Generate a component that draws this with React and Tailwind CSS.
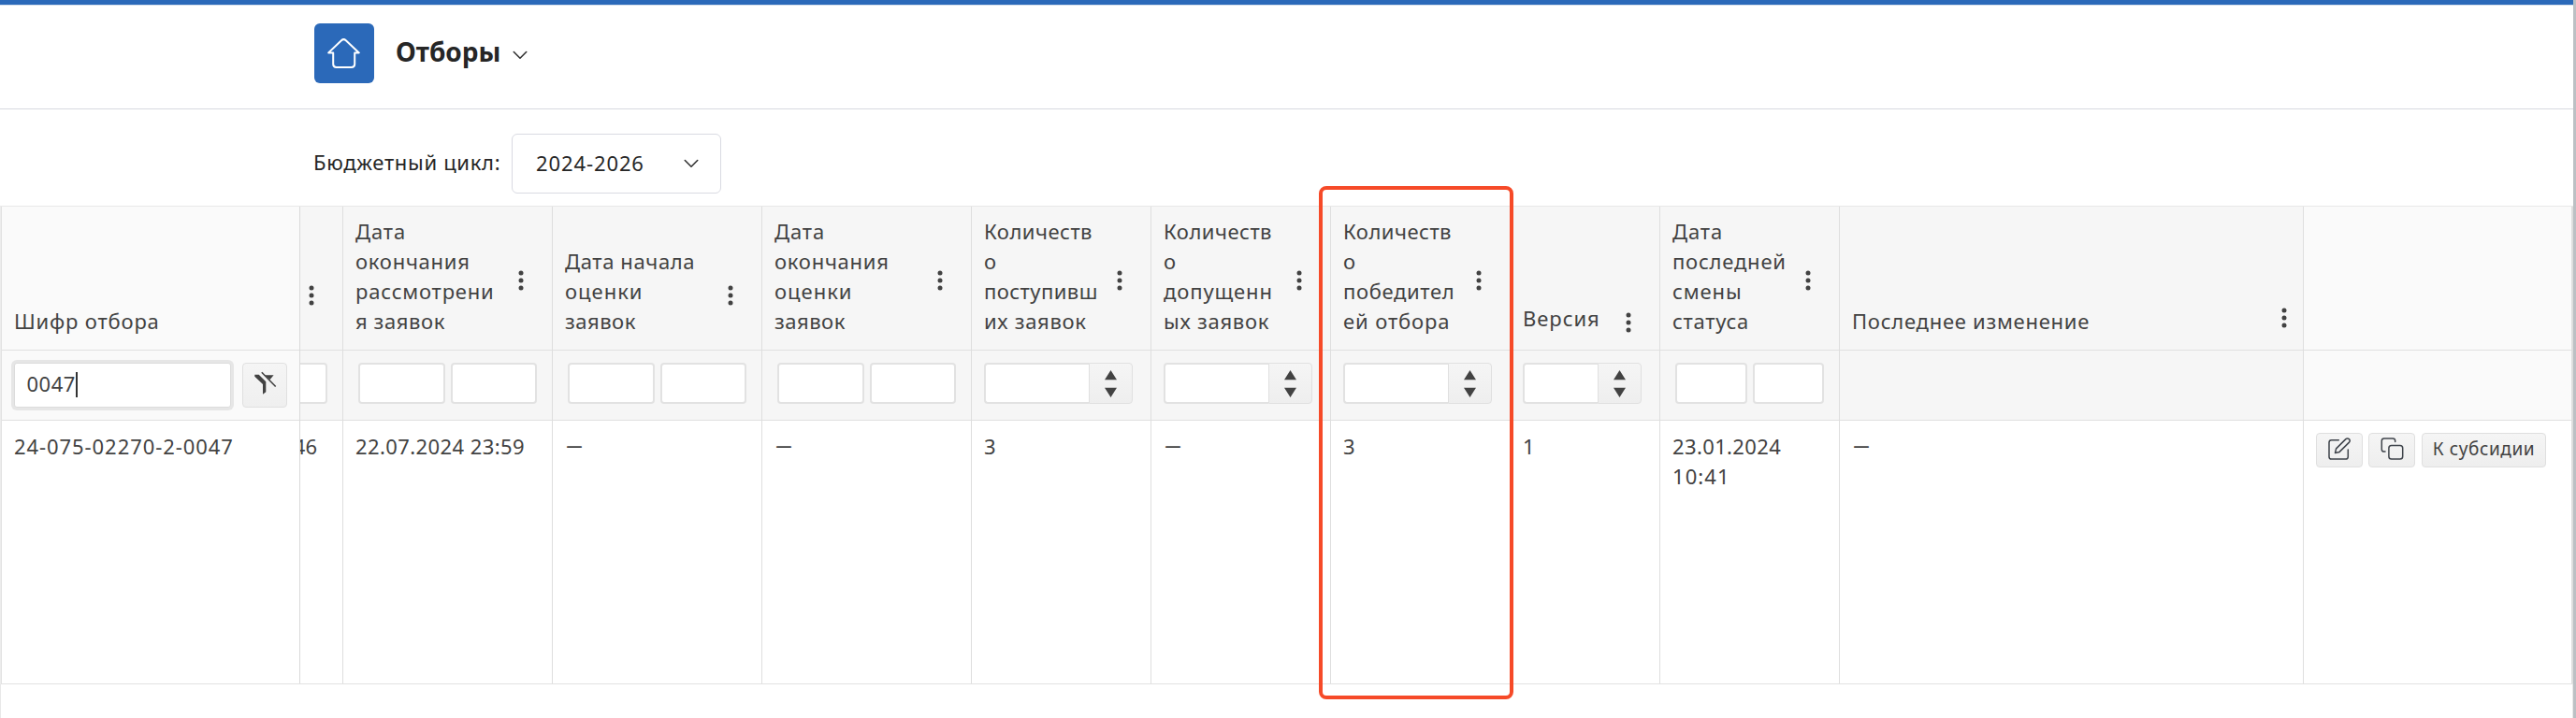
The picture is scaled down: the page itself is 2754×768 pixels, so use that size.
import { clsx } from 'clsx';

const dates = (
  <div className="flex w-full gap-1.5 px-4">
    <div className="h-11 flex-1 rounded-[4px] border-2 border-[#e2e2e2] bg-white" />
    <div className="h-11 flex-1 rounded-[4px] border-2 border-[#e2e2e2] bg-white" />
  </div>
);

const stepper = (
  <div className="flex w-full pl-[13px] pr-[19px]">
    <div className="h-11 flex-1 rounded-l-[4px] border-2 border-r-0 border-[#e2e2e2] bg-white" />
    <div className="flex h-11 w-[47px] items-center justify-center rounded-r-[4px] border border-[#e0e0e0] bg-linear-to-b from-[#f5f5f5] to-[#eeeeee]">
      <svg className="h-[29px] w-[13px] fill-[#424242]" viewBox="0 0 13 29">
        <path d="M6.5 0 L13 10.3 H0 Z M0 18.7 H13 L6.5 29 Z" />
      </svg>
    </div>
  </div>
);

const columns = [
  {
    width: 'w-[224px]',
    title: [
      ['Дата', 'tracking-[0.9px]'],
      ['окончания', 'tracking-[0.75px]'],
      ['рассмотрени', 'tracking-[0.8px]'],
      ['я заявок', 'tracking-[0.59px]'],
    ],
    filter: dates,
    value: [['22.07.2024 23:59', 'tracking-[0.41px]']],
  },
  {
    width: 'w-[224px]',
    title: [
      ['Дата начала', 'tracking-[0.62px]'],
      ['оценки', 'tracking-[1px]'],
      ['заявок', 'tracking-[0.51px]'],
    ],
    filter: dates,
  },
  {
    width: 'w-[224px]',
    title: [
      ['Дата', 'tracking-[0.9px]'],
      ['окончания', 'tracking-[0.75px]'],
      ['оценки', 'tracking-[1px]'],
      ['заявок', 'tracking-[0.51px]'],
    ],
    filter: dates,
  },
  {
    width: 'w-[192px]',
    title: [
      ['Количеств', 'tracking-[0.5px]'],
      ['о', ''],
      ['поступивш', 'tracking-[0.45px]'],
      ['их заявок', 'tracking-[0.7px]'],
    ],
    filter: stepper,
    value: [['3', '']],
  },
  {
    width: 'w-[192px]',
    title: [
      ['Количеств', 'tracking-[0.5px]'],
      ['о', ''],
      ['допущенн', 'tracking-[0.88px]'],
      ['ых заявок', 'tracking-[0.75px]'],
    ],
    filter: stepper,
  },
  {
    width: 'w-[192px]',
    title: [
      ['Количеств', 'tracking-[0.5px]'],
      ['о', ''],
      ['победител', 'tracking-[0.65px]'],
      ['ей отбора', 'tracking-[0.9px]'],
    ],
    filter: stepper,
    value: [['3', '']],
  },
  {
    width: 'w-[160px]',
    title: [['Версия', 'tracking-[0.95px]']],
    headPad: 'pb-[18px]',
    filter: stepper,
    value: [['1', '']],
  },
  {
    width: 'w-[192px]',
    title: [
      ['Дата', 'tracking-[0.9px]'],
      ['последней', 'tracking-[0.78px]'],
      ['смены', 'tracking-[0.9px]'],
      ['статуса', 'tracking-[0.72px]'],
    ],
    filter: dates,
    value: [
      ['23.01.2024', 'tracking-[0.37px]'],
      ['10:41', 'tracking-[1.1px]'],
    ],
  },
  {
    width: 'w-[496px]',
    title: [['Последнее изменение', 'tracking-[0.74px]']],
    dots: 'mr-[17px] mb-1.5',
    filter: null,
  },
];

function Dots({ className }) {
  return (
    <svg className={clsx('h-[22px] w-1.5 shrink-0 fill-[#424242]', className)} viewBox="0 0 6 22">
      <circle cx="3" cy="3" r="2.5" />
      <circle cx="3" cy="11" r="2.5" />
      <circle cx="3" cy="19" r="2.5" />
    </svg>
  );
}

function Chevron() {
  return (
    <svg className="h-2.5 w-4 fill-none stroke-[#333] stroke-[1.6]" viewBox="0 0 16 10" strokeLinecap="round" strokeLinejoin="round">
      <path d="M1.3 1.5 L8 8.2 L14.7 1.5" />
    </svg>
  );
}

function Column({ width, title, headPad = 'pb-[15px]', dots = 'mt-2.5 mr-[30px]', filter, value }) {
  return (
    <div className={clsx('flex shrink-0 flex-col border-r border-[#dedede]', width)}>
      <div className={clsx('flex h-[153px] flex-col justify-end bg-[#f6f6f6] pl-[13px]', headPad)}>
        <div className="flex items-center justify-between">
          <div>
            {title.map(([text, tracking]) => (
              <div key={text} className={clsx('whitespace-nowrap', tracking)}>{text}</div>
            ))}
          </div>
          <Dots className={dots} />
        </div>
      </div>
      <div className="flex h-[76px] border-y border-[#e0e0e0] bg-[#f6f6f6] pt-[13px]">{filter}</div>
      <div className="pl-[13px] pt-[11px]">
        {value ? (
          value.map(([text, tracking]) => (
            <div key={text} className={clsx('whitespace-nowrap', tracking)}>{text}</div>
          ))
        ) : (
          <div className="pl-[1.5px] text-[17px] font-semibold leading-[31px]">—</div>
        )}
      </div>
    </div>
  );
}

export default function App() {
  return (
    <div className="relative flex h-[768px] w-[2754px] overflow-hidden bg-white font-['Noto_Sans',sans-serif] text-[22px] leading-8 text-[#424242]">
      <div className="flex w-[2751px] flex-col">
        <div className="h-1.5 shrink-0 border-b border-[#d5deec] bg-[#2b69b9]" />
        <header className="flex h-[111px] shrink-0 items-start border-b border-[#d8d9e0] pl-[336px] pt-[19px]">
          <div className="flex size-16 items-center justify-center rounded-[6px] bg-[#2b69b9]">
            <svg className="mr-[1px] h-[34px] w-[35px] fill-none stroke-white stroke-2" viewBox="0 0 35 34" strokeLinecap="round" strokeLinejoin="round">
              <path d="M1.2 16.4 L15 3.2 Q17.4 1 19.8 3.2 L33.8 16.4 H29.2 V28.6 Q29.2 32 25.8 32 H9.6 Q6.2 32 6.2 28.6 V16.4 Z" />
            </svg>
          </div>
          <div className="ml-[23px] mt-[11px] text-[28px] font-bold leading-[38px] text-[#262626]">Отборы</div>
          <div className="ml-[13px] mt-[29px]"><Chevron /></div>
        </header>

        <div className="flex h-[103px] shrink-0 items-start pl-[335px] pt-[26px] text-[#262626]">
          <div className="w-[212px] pt-[13.5px] tracking-[0.7px]">Бюджетный цикл:</div>
          <div className="flex h-16 w-[224px] items-center justify-between rounded-[6px] border border-[#d9dae2] bg-white pl-[25px] pr-[23px]">
            <span className="-mt-0.5 tracking-[0.9px]">2024-2026</span>
            <Chevron />
          </div>
        </div>

        <div className="flex h-[512px] shrink-0 border-l border-[#ececec] border-t border-t-[#e8e8e8]">
          <div className="flex w-[2750px] shrink-0 border-b border-l border-[#e2e2e2]">
            <div className="flex w-[319px] shrink-0 flex-col border-r border-[#dadada]">
              <div className="flex h-[153px] items-end bg-[#fafafa] pb-[15px] pl-[13px] tracking-[0.82px]">Шифр отбора</div>
              <div className="flex h-[76px] gap-3 border-y border-[#e0e0e0] bg-[#fafafa] pl-[13px] pt-[13px]">
                <div className="flex h-12 w-[232px] items-center rounded-[3px] border border-[#dcdcdc] bg-white pl-[12.5px] ring-3 ring-[#e6e6e6]">
                  <span className="-mt-1 w-[52px] tracking-[0.5px]">0047</span>
                  <span className="-mt-0.5 h-[27px] w-0.5 bg-[#333]" />
                </div>
                <div className="flex size-12 justify-center rounded-[4px] border border-[#e0e0e0] bg-linear-to-b from-[#f5f5f5] to-[#efefef] pt-2">
                  <svg className="ml-0.5 h-[26px] w-6" viewBox="0 0 24 26">
                    <path className="fill-[#424242]" d="M0.3 3.7 H4.7 L12.3 11.3 V22.3 L9 24.7 V14 L0.3 5.7 Z M11 4.3 H20.6 L16.6 9 Z" />
                    <path className="stroke-[#424242] stroke-[1.6]" d="M7.8 1.3 L22.7 16.5" />
                  </svg>
                </div>
              </div>
              <div className="pl-[13px] pt-[11px] tracking-[0.93px]">24-075-02270-2-0047</div>
            </div>

            <div className="flex w-[46px] shrink-0 flex-col border-r border-[#dedede]">
              <div className="flex h-[153px] items-end bg-[#f6f6f6] pb-[47px] pl-[9px]"><Dots /></div>
              <div className="h-[76px] border-y border-[#e0e0e0] bg-[#f6f6f6] pt-[13px]">
                <div className="h-11 w-[29px] rounded-r-[4px] border-2 border-l-0 border-[#e2e2e2] bg-white" />
              </div>
              <div className="flex w-[18px] justify-end overflow-hidden pt-[11px]">46</div>
            </div>

            {columns.map((column, i) => <Column key={i} {...column} />)}

            <div className="flex flex-1 flex-col border-r-2 border-[#dedede]">
              <div className="h-[153px] bg-[#fafafa]" />
              <div className="h-[76px] border-y border-[#e0e0e0] bg-[#fafafa]" />
              <div className="flex pl-[13px] pt-[13px]">
                <div className="flex h-[37px] w-[50px] items-start justify-center rounded-[4px] border border-[#dfdfdf] bg-linear-to-b from-[#f5f5f5] to-[#eeeeee] pt-1">
                  <svg className="size-[25px] fill-none stroke-[#3f444b] stroke-[1.5]" viewBox="0 0 25 25" strokeLinecap="round" strokeLinejoin="round">
                    <path d="M11.3 2.7 H3.6 Q1 2.7 1 5.3 V20.4 Q1 23 3.6 23 H18.7 Q21.3 23 21.3 20.4 V13" />
                    <path d="M7.5 16.4 L8.6 11.9 L18.9 1.6 Q20.6 0.2 22.4 1.6 Q24 3.4 22.5 5.1 L12.1 15.4 Z" />
                  </svg>
                </div>
                <div className="ml-1.5 flex h-[37px] w-[50px] items-start justify-center rounded-[4px] border border-[#dfdfdf] bg-linear-to-b from-[#f5f5f5] to-[#eeeeee] pt-1">
                  <svg className="size-[25px] fill-none stroke-[#3f444b] stroke-[1.5]" viewBox="0 0 25 25" strokeLinecap="round" strokeLinejoin="round">
                    <path d="M15.7 4.6 V3.6 Q15.7 1 13.1 1 H3.9 Q1.3 1 1.3 3.6 V12.4 Q1.3 15 3.9 15 H5" />
                    <rect x="8.9" y="8.5" width="14.8" height="14.5" rx="2.8" />
                  </svg>
                </div>
                <div className="ml-[7px] flex h-[37px] w-[133px] items-center justify-center whitespace-nowrap rounded-[4px] border border-[#dfdfdf] bg-linear-to-b from-[#f5f5f5] to-[#eeeeee] pb-1 text-[19px] tracking-[0.59px]">
                  К субсидии
                </div>
              </div>
            </div>
          </div>
        </div>
        <div className="flex-1 border-x border-[#e8e8e8]" />
      </div>
      <div className="w-[3px] bg-[#bcc0c4]" />
      <div className="absolute left-[1410px] top-[199px] h-[549px] w-[208px] rounded-[8px] border-4 border-[#f64a28]" />
    </div>
  );
}
